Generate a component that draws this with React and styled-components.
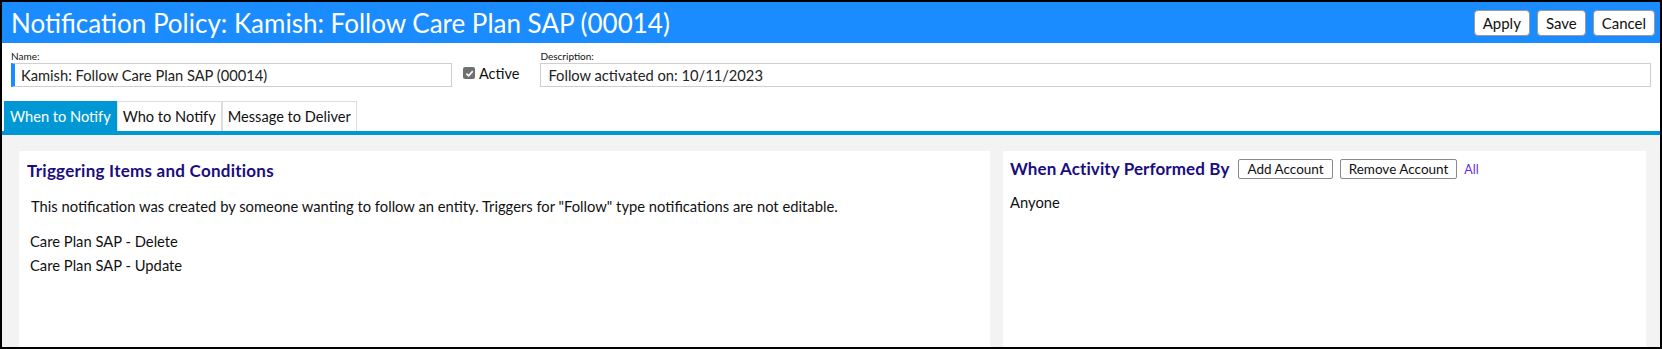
import React from 'react';
import styled, { createGlobalStyle } from 'styled-components';

const GlobalStyle = createGlobalStyle`
    html, body {
        margin: 0;
        padding: 0;
        background: #ffffff;
    }

    * {
        box-sizing: border-box;
    }
`;

const font = `'Segoe UI', Lato, 'Liberation Sans', sans-serif`;

const Frame = styled.div`
    width: 1662px;
    height: 349px;
    border: 2px solid #000000;
    display: flex;
    flex-direction: column;
    overflow: hidden;
    background: #f3f3f3;
    font-family: ${font};
    color: #111111;
`;

const Header = styled.header`
    height: 41px;
    flex: none;
    background: #1a8cff;
    display: flex;
    align-items: center;
    justify-content: space-between;
    padding: 0 5px 0 9px;
`;

const Title = styled.h1`
    margin: 0;
    font-size: 26px;
    font-weight: 400;
    color: #ffffff;
    white-space: nowrap;
`;

const HeaderActions = styled.div`
    display: flex;
    gap: 7px;
`;

const HeaderButton = styled.button`
    height: 26px;
    padding: 0 8px;
    background: #ffffff;
    border: 1px solid #9a9a9a;
    border-radius: 4px;
    font-family: ${font};
    font-size: 15px;
    color: #111111;
`;

const Fields = styled.div`
    flex: none;
    background: #ffffff;
    display: flex;
    align-items: flex-end;
    padding: 7px 9px 14px 9px;
`;

const Field = styled.label`
    display: flex;
    flex-direction: column;
    width: ${p => p.$width || 'auto'};
    flex: ${p => (p.$grow ? 1 : 'none')};
`;

const FieldLabel = styled.span`
    font-size: 10px;
    line-height: 13px;
    color: #111111;
`;

const TextBox = styled.div`
    height: 24px;
    border: 1px solid #cfcfcf;
    border-left: ${p => (p.$required ? '4px solid #1a8cff' : '1px solid #cfcfcf')};
    padding-left: ${p => (p.$required ? '6px' : '7px')};
    display: flex;
    align-items: center;
    font-size: 14.7px;
    color: #222222;
`;

const ActiveToggle = styled.div`
    flex: none;
    display: flex;
    align-items: center;
    gap: 4px;
    margin: 0 21px 0 11px;
    height: 28px;
    font-size: 14.5px;
`;

const CheckBox = styled.span`
    width: 12px;
    height: 12px;
    border-radius: 2px;
    background: #707070;
    display: flex;
    align-items: center;
    justify-content: center;
`;

const Tabs = styled.nav`
    flex: none;
    display: flex;
    background: #ffffff;
    padding-left: 2px;
    border-bottom: 4px solid #0098d4;
`;

const Tab = styled.div`
    height: 30px;
    padding: 0 5px;
    display: flex;
    align-items: center;
    font-size: 14.6px;
    background: ${p => (p.$active ? '#0098d4' : '#ffffff')};
    color: ${p => (p.$active ? '#ffffff' : '#111111')};
    border: 1px solid ${p => (p.$active ? '#0098d4' : '#dddddd')};
    border-bottom: none;
`;

const Body = styled.main`
    flex: 1;
    display: grid;
    grid-template-columns: 971px 643px;
    gap: 13px;
    padding: 16px 14px 0 17px;
`;

const Panel = styled.section`
    background: #ffffff;
    padding: ${p => p.$pad || '10px 8px'};
`;

const PanelTitle = styled.h2`
    margin: 0;
    font-size: 17px;
    font-weight: 700;
    color: #1a0d80;
    line-height: 20px;
    white-space: nowrap;
    letter-spacing: ${p => p.$spacing || '0.1px'};
`;

const PanelHead = styled.div`
    display: flex;
    align-items: center;
    gap: 7px;
`;

const SmallButton = styled.button`
    height: 20px;
    padding: 0 8px;
    background: #ffffff;
    border: 1px solid #8a8a8a;
    border-radius: 2px;
    font-family: ${font};
    font-size: 13.5px;
    color: #111111;
    &:first-of-type {
        margin-left: 2px;
    }
`;

const LinkText = styled.span`
    font-size: 12.5px;
    color: #6a2ce0;
`;

const Note = styled.p`
    margin: 17px 0 0 4px;
    font-size: 14.75px;
    line-height: 16px;
`;

const Items = styled.ul`
    list-style: none;
    margin: 15px 0 0 3px;
    padding: 0;

    li {
        font-size: 14.75px;
        line-height: 24px;
    }
`;

const Plain = styled.div`
    margin-top: 14px;
    font-size: 14.75px;
`;

export default function App() {
    return (
        <>
            <GlobalStyle />
            <Frame>
                <Header>
                    <Title>Notification Policy: Kamish: Follow Care Plan SAP (00014)</Title>
                    <HeaderActions>
                        <HeaderButton>Apply</HeaderButton>
                        <HeaderButton>Save</HeaderButton>
                        <HeaderButton>Cancel</HeaderButton>
                    </HeaderActions>
                </Header>
                <Fields>
                    <Field $width="441px">
                        <FieldLabel>Name:</FieldLabel>
                        <TextBox $required>Kamish: Follow Care Plan SAP (00014)</TextBox>
                    </Field>
                    <ActiveToggle>
                        <CheckBox>
                            <svg width="9" height="9" viewBox="0 0 10 10">
                                <path d="M1.5 5.2 L4 7.6 L8.6 2.4" fill="none" stroke="#ffffff" strokeWidth="1.8" />
                            </svg>
                        </CheckBox>
                        Active
                    </ActiveToggle>
                    <Field $grow>
                        <FieldLabel>Description:</FieldLabel>
                        <TextBox>Follow activated on: 10/11/2023</TextBox>
                    </Field>
                </Fields>
                <Tabs>
                    <Tab $active>When to Notify</Tab>
                    <Tab>Who to Notify</Tab>
                    <Tab>Message to Deliver</Tab>
                </Tabs>
                <Body>
                    <Panel>
                        <PanelTitle $spacing="0.25px">Triggering Items and Conditions</PanelTitle>
                        <Note>This notification was created by someone wanting to follow an entity. Triggers for "Follow" type notifications are not editable.</Note>
                        <Items>
                            <li>Care Plan SAP - Delete</li>
                            <li>Care Plan SAP - Update</li>
                        </Items>
                    </Panel>
                    <Panel $pad="8px 7px">
                        <PanelHead>
                            <PanelTitle>When Activity Performed By</PanelTitle>
                            <SmallButton>Add Account</SmallButton>
                            <SmallButton>Remove Account</SmallButton>
                            <LinkText>All</LinkText>
                        </PanelHead>
                        <Plain>Anyone</Plain>
                    </Panel>
                </Body>
            </Frame>
        </>
    );
}
